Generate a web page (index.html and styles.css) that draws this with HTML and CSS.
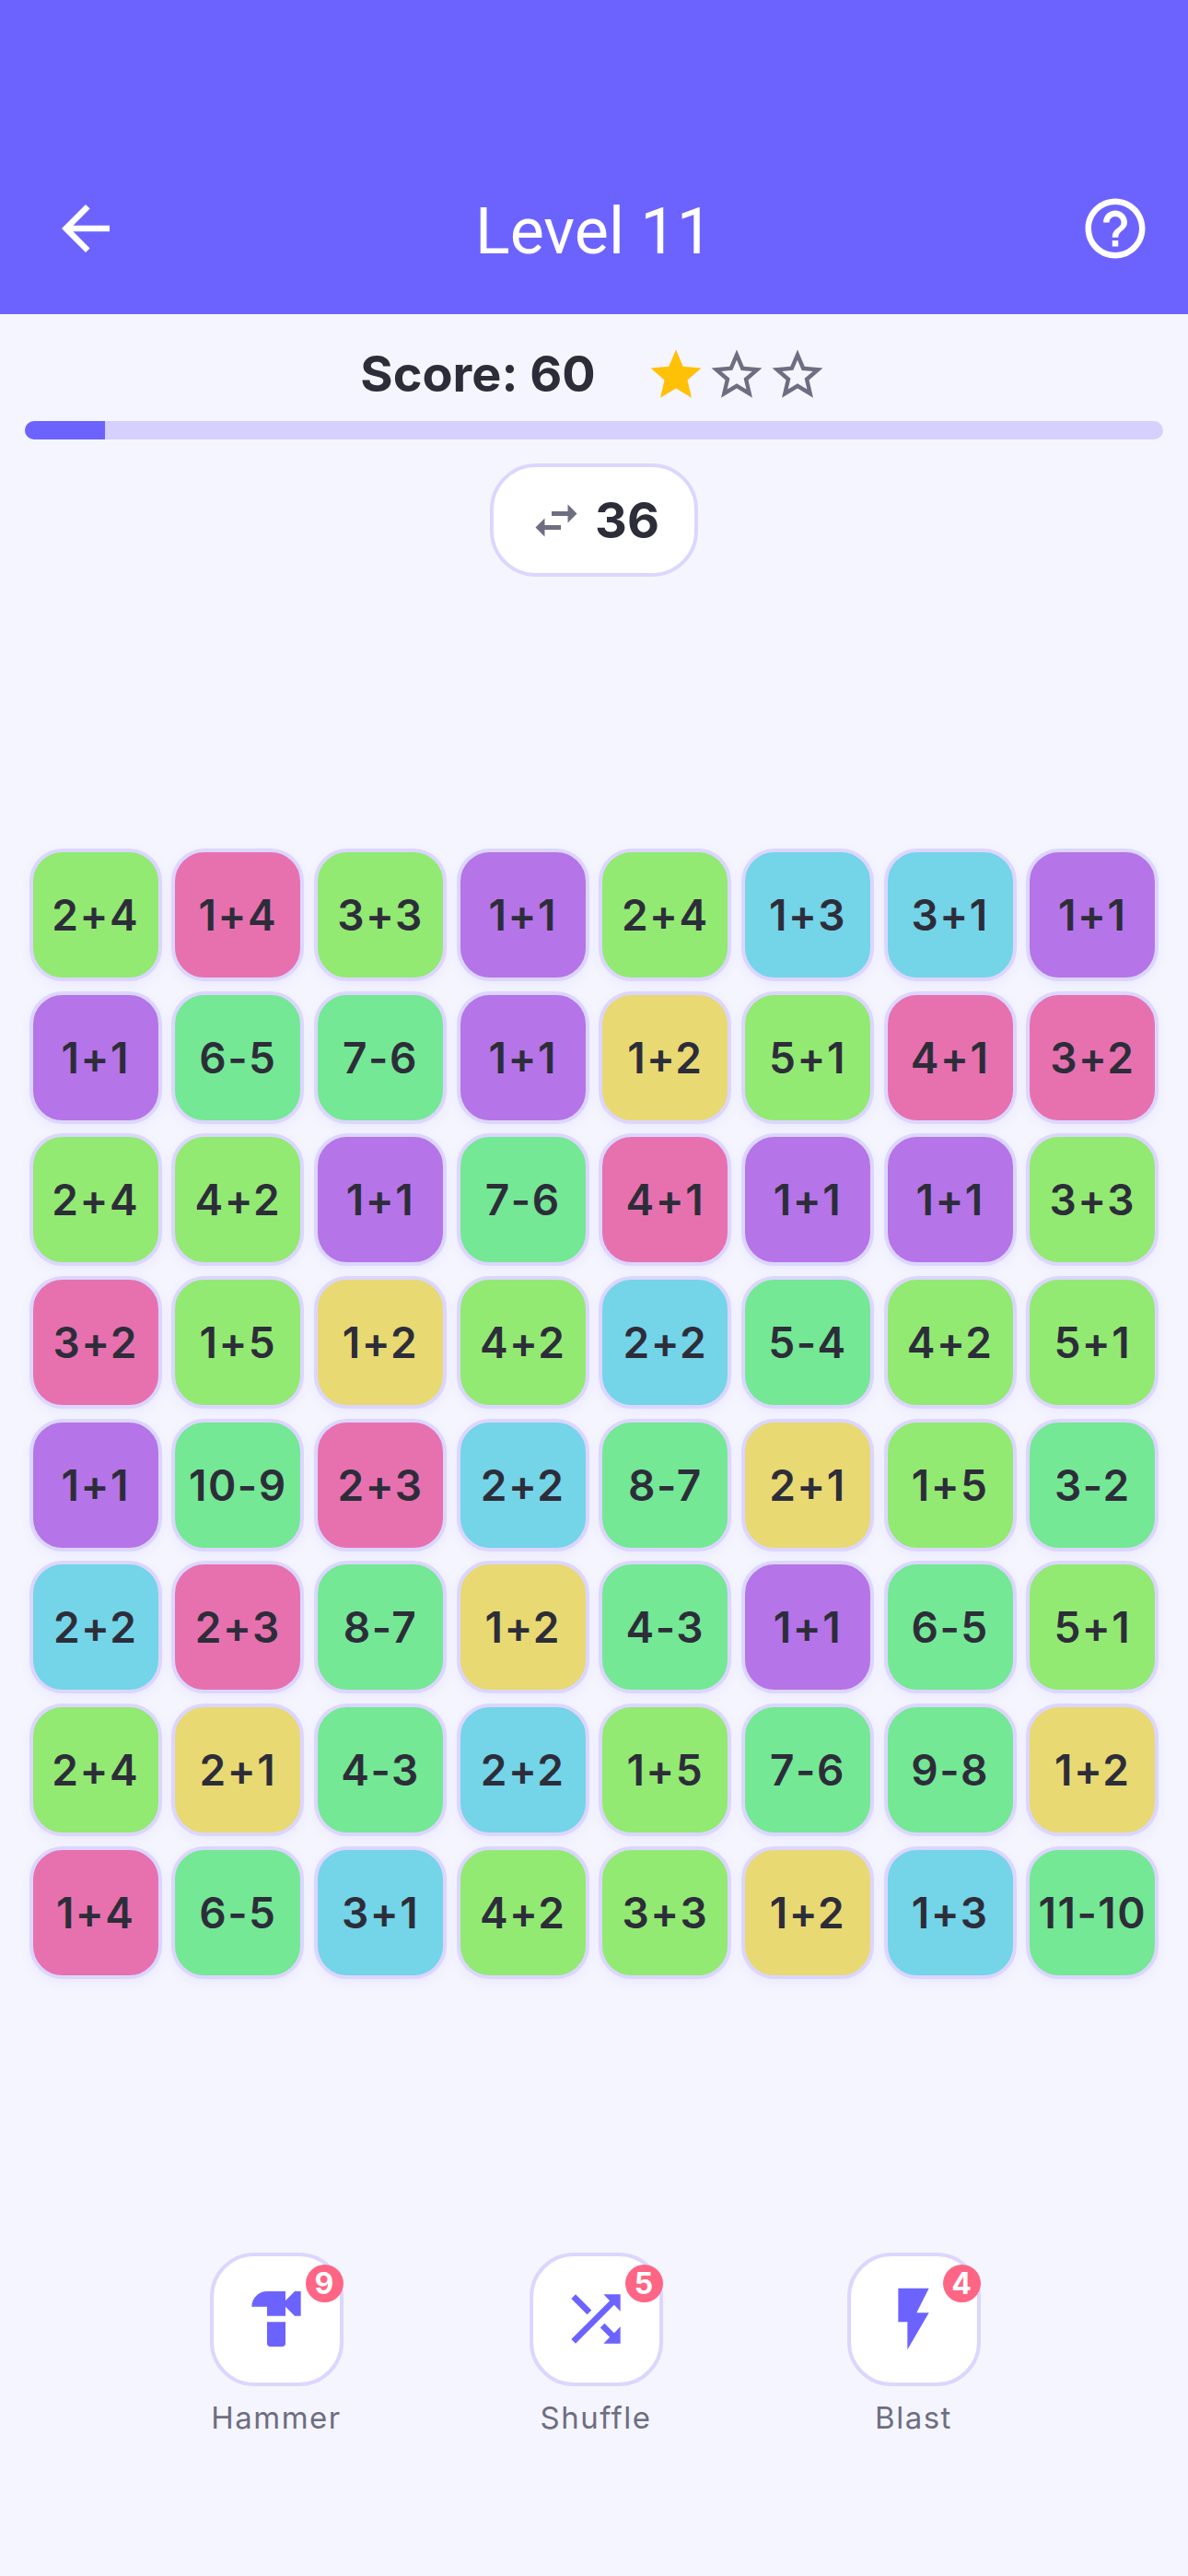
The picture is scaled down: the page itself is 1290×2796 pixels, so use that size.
FILE: index.html
```html
<!DOCTYPE html>
<html lang="en">
<head>
<meta charset="utf-8">
<title>Level 11</title>
<link rel="stylesheet" href="styles.css">
</head>
<body>
<header class="topbar">
  <svg class="back" viewBox="0 0 24 24"><path d="M20 11H7.83l5.59-5.59L12 4l-8 8 8 8 1.41-1.41L7.83 13H20v-2z"/></svg>
  <h1 class="title">Level 11</h1>
  <svg class="help" viewBox="0 0 24 24"><path d="M11 18h2v-2h-2v2zm1-16C6.48 2 2 6.48 2 12s4.48 10 10 10 10-4.48 10-10S17.52 2 12 2zm0 18c-4.41 0-8-3.59-8-8s3.59-8 8-8 8 3.59 8 8-3.59 8-8 8zm0-14c-2.21 0-4 1.79-4 4h2c0-1.1.9-2 2-2s2 .9 2 2c0 2-3 1.75-3 5h2c0-2.25 3-2.5 3-5 0-2.21-1.79-4-4-4z"/></svg>
</header>
<section class="score-row">
  <span class="score">Score: 60</span>
  <span class="stars">
    <svg class="star on" viewBox="0 0 24 24"><path d="M12 17.27L18.18 21l-1.64-7.03L22 9.24l-7.19-.61L12 2 9.19 8.63 2 9.24l5.46 4.73L5.82 21z"/></svg>
    <svg class="star" viewBox="0 0 24 24"><path d="M22 9.24l-7.19-.62L12 2 9.19 8.63 2 9.24l5.46 4.73L5.82 21 12 17.27 18.18 21l-1.63-7.03L22 9.24zM12 15.4l-3.76 2.27 1-4.28-3.32-2.88 4.38-.38L12 6.1l1.71 4.04 4.38.38-3.32 2.88 1 4.28L12 15.4z"/></svg>
    <svg class="star" viewBox="0 0 24 24"><path d="M22 9.24l-7.19-.62L12 2 9.19 8.63 2 9.24l5.46 4.73L5.82 21 12 17.27 18.18 21l-1.63-7.03L22 9.24zM12 15.4l-3.76 2.27 1-4.28-3.32-2.88 4.38-.38L12 6.1l1.71 4.04 4.38.38-3.32 2.88 1 4.28L12 15.4z"/></svg>
  </span>
</section>
<div class="progress"><div class="progress-fill" style="width:7%"></div></div>
<div class="moves">
  <svg class="swap" viewBox="0 0 24 24"><path d="M6.99 11L3 15l3.99 4v-3H14v-2H6.99v-3zM21 9l-3.99-4v3H10v2h7.01v3L21 9z"/></svg>
  <span class="moves-count">36</span>
</div>
<main class="board">
  <div class="tile c6">2+4</div><div class="tile c5">1+4</div><div class="tile c6">3+3</div><div class="tile c2">1+1</div><div class="tile c6">2+4</div><div class="tile c4">1+3</div><div class="tile c4">3+1</div><div class="tile c2">1+1</div>
  <div class="tile c2">1+1</div><div class="tile c1">6-5</div><div class="tile c1">7-6</div><div class="tile c2">1+1</div><div class="tile c3">1+2</div><div class="tile c6">5+1</div><div class="tile c5">4+1</div><div class="tile c5">3+2</div>
  <div class="tile c6">2+4</div><div class="tile c6">4+2</div><div class="tile c2">1+1</div><div class="tile c1">7-6</div><div class="tile c5">4+1</div><div class="tile c2">1+1</div><div class="tile c2">1+1</div><div class="tile c6">3+3</div>
  <div class="tile c5">3+2</div><div class="tile c6">1+5</div><div class="tile c3">1+2</div><div class="tile c6">4+2</div><div class="tile c4">2+2</div><div class="tile c1">5-4</div><div class="tile c6">4+2</div><div class="tile c6">5+1</div>
  <div class="tile c2">1+1</div><div class="tile c1">10-9</div><div class="tile c5">2+3</div><div class="tile c4">2+2</div><div class="tile c1">8-7</div><div class="tile c3">2+1</div><div class="tile c6">1+5</div><div class="tile c1">3-2</div>
  <div class="tile c4">2+2</div><div class="tile c5">2+3</div><div class="tile c1">8-7</div><div class="tile c3">1+2</div><div class="tile c1">4-3</div><div class="tile c2">1+1</div><div class="tile c1">6-5</div><div class="tile c6">5+1</div>
  <div class="tile c6">2+4</div><div class="tile c3">2+1</div><div class="tile c1">4-3</div><div class="tile c4">2+2</div><div class="tile c6">1+5</div><div class="tile c1">7-6</div><div class="tile c1">9-8</div><div class="tile c3">1+2</div>
  <div class="tile c5">1+4</div><div class="tile c1">6-5</div><div class="tile c4">3+1</div><div class="tile c6">4+2</div><div class="tile c6">3+3</div><div class="tile c3">1+2</div><div class="tile c4">1+3</div><div class="tile c1">11-10</div>
</main>
<footer class="tools">
  <div class="tool tool-wide">
    <div class="tool-box">
      <svg class="tool-icon" viewBox="0 0 24 24"><path d="M18 3l-3 3V3H9C6.24 3 4 5.24 4 8h5v3h6V8l3 3h2V3h-2zM9 13v7c0 .55.45 1 1 1h4c.55 0 1-.45 1-1v-7H9z"/></svg>
      <span class="badge">9</span>
    </div>
    <span class="tool-label">Hammer</span>
  </div>
  <div class="tool">
    <div class="tool-box">
      <svg class="tool-icon" viewBox="0 0 24 24"><path d="M10.59 9.17L5.41 4 4 5.41l5.17 5.17 1.42-1.41zM14.5 4l2.04 2.04L4 18.59 5.41 20 17.96 7.46 20 9.5V4h-5.5zm.33 9.41l-1.41 1.41 3.13 3.13L14.5 20H20v-5.5l-2.04 2.04-3.13-3.13z"/></svg>
      <span class="badge">5</span>
    </div>
    <span class="tool-label">Shuffle</span>
  </div>
  <div class="tool">
    <div class="tool-box">
      <svg class="tool-icon" viewBox="0 0 24 24"><path d="M7 2v11h3v9l7-12h-4l4-8z"/></svg>
      <span class="badge">4</span>
    </div>
    <span class="tool-label">Blast</span>
  </div>
</footer>
</body>
</html>
```

FILE: styles.css
```css
* { box-sizing: border-box; }
html, body { margin: 0; padding: 0; }
body {
  height: 2796px;
  background: #f5f5ff;
  color: #2d2d3a;
  font-family: "Inter", "Liberation Sans", sans-serif;
  overflow: hidden;
}
.topbar {
  height: 341px;
  background: #6c63ff;
  padding: 209px 40px 0;
  display: grid;
  grid-template-columns: 1fr auto 1fr;
  align-items: start;
}
.back { width: 78px; height: 78px; margin-left: 14px; fill: #fff; }
.help { width: 78px; height: 78px; justify-self: end; fill: #fff; }
.title {
  margin: 0;
  padding-top: 3px;
  color: #fff;
  font-family: "Roboto", "Inter", sans-serif;
  font-size: 70px;
  font-weight: 400;
  line-height: 78px;
  white-space: nowrap;
}
.score-row {
  margin-top: 33px;
  height: 66px;
  display: flex;
  justify-content: center;
  align-items: center;
  gap: 54px;
}
.score { padding-bottom: 3px; font-size: 54px; font-weight: 700; line-height: 66px; }
.stars { display: flex; }
.star { width: 66px; height: 66px; fill: #6e6e82; }
.star.on { fill: #ffc107; }
.progress {
  margin: 17px 27px 0;
  height: 20px;
  border-radius: 10px;
  background: #d6d0ff;
  overflow: hidden;
}
.progress-fill { height: 100%; background: #6c63ff; }
.moves {
  width: 226px;
  height: 123px;
  margin: 26px auto 0;
  background: #fff;
  border: 4px solid #dcd6ff;
  border-radius: 50px;
  display: flex;
  align-items: center;
  justify-content: center;
  gap: 12px;
}
.swap { width: 60px; height: 60px; fill: #6e6e82; }
.moves-count { font-size: 54px; font-weight: 700; line-height: 66px; }
.board {
  margin-top: 295px;
  display: grid;
  grid-template-columns: repeat(8, 144px);
  grid-auto-rows: 144px;
  gap: 10.67px;
  justify-content: center;
}
.tile {
  display: flex;
  align-items: center;
  justify-content: center;
  border: 4px solid #dcd6ff;
  border-radius: 36px;
  font-size: 46px;
  font-weight: 600;
  letter-spacing: 1.5px;
  box-shadow: 0 4px 12px rgba(108, 99, 255, 0.08);
}
.c1 { background: #74e894; }
.c2 { background: #b574e8; }
.c3 { background: #e8d972; }
.c4 { background: #74d4e8; }
.c5 { background: #e771af; }
.c6 { background: #92ea72; }
.tools {
  margin-top: 297px;
  display: flex;
  justify-content: center;
  gap: 200px;
}
.tool { display: flex; flex-direction: column; align-items: center; width: 145px; }
.tool-wide { width: 149px; }
.tool-box {
  position: relative;
  width: 145px;
  height: 145px;
  background: #fff;
  border: 4px solid #dcd6ff;
  border-radius: 48px;
  display: flex;
  align-items: center;
  justify-content: center;
}
.tool-icon { width: 80px; height: 80px; fill: #6c63ff; }
.badge {
  position: absolute;
  top: 9px;
  right: -4px;
  min-width: 41px;
  height: 41px;
  border-radius: 50%;
  background: #ff6584;
  color: #fff;
  font-size: 32px;
  font-weight: 700;
  line-height: 41px;
  text-align: center;
}
.tool-label {
  margin-top: 10px;
  font-size: 33px;
  line-height: 48px;
  color: #6e6e82;
  letter-spacing: 1.5px;
  white-space: nowrap;
}
```
